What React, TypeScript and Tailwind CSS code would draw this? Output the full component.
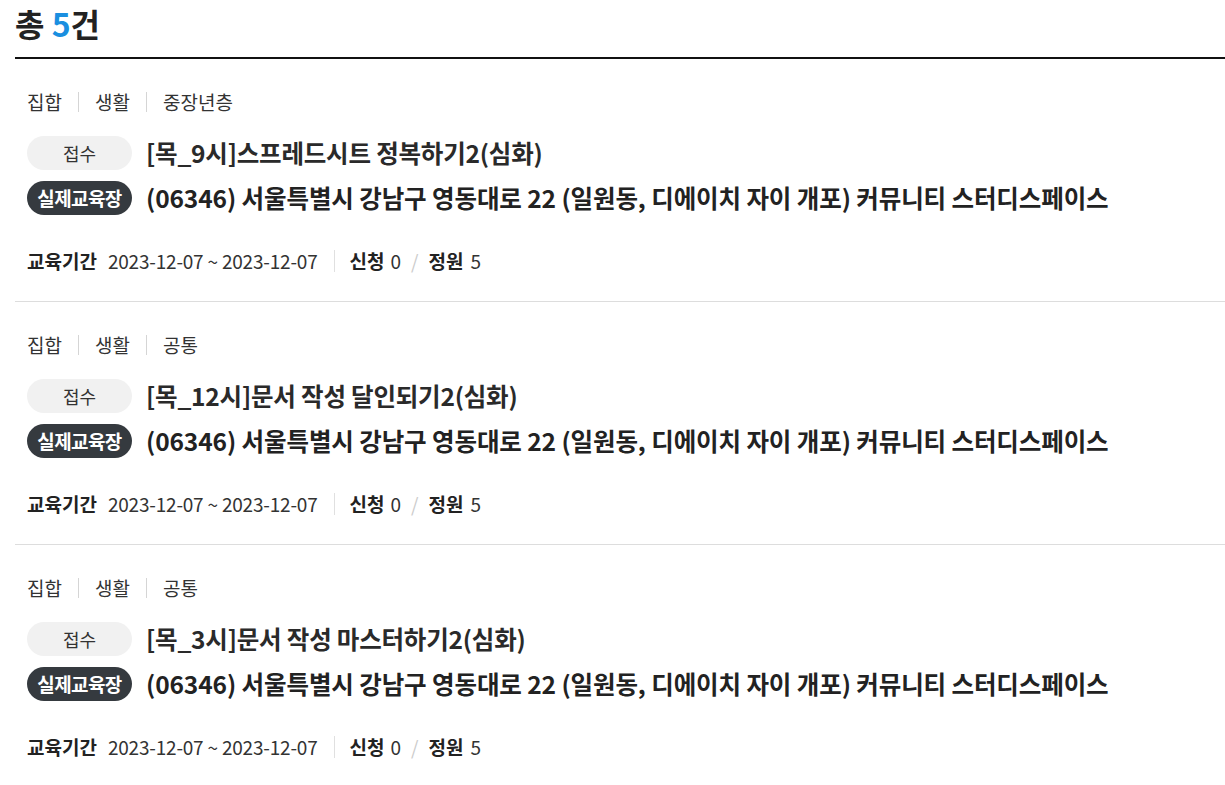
import React from 'react';

interface Course {
  tags: string[];
  status: string;
  title: string;
  address: string;
  period: string;
  applied: number;
  capacity: number;
}

const courses: Course[] = [
  {
    tags: ['집합', '생활', '중장년층'],
    status: '접수',
    title: '[목_9시]스프레드시트 정복하기2(심화)',
    address: '(06346) 서울특별시 강남구 영동대로 22 (일원동, 디에이치 자이 개포) 커뮤니티 스터디스페이스',
    period: '2023-12-07 ~ 2023-12-07',
    applied: 0,
    capacity: 5,
  },
  {
    tags: ['집합', '생활', '공통'],
    status: '접수',
    title: '[목_12시]문서 작성 달인되기2(심화)',
    address: '(06346) 서울특별시 강남구 영동대로 22 (일원동, 디에이치 자이 개포) 커뮤니티 스터디스페이스',
    period: '2023-12-07 ~ 2023-12-07',
    applied: 0,
    capacity: 5,
  },
  {
    tags: ['집합', '생활', '공통'],
    status: '접수',
    title: '[목_3시]문서 작성 마스터하기2(심화)',
    address: '(06346) 서울특별시 강남구 영동대로 22 (일원동, 디에이치 자이 개포) 커뮤니티 스터디스페이스',
    period: '2023-12-07 ~ 2023-12-07',
    applied: 0,
    capacity: 5,
  },
];

const CourseItem: React.FC<{ course: Course }> = ({ course }) => {
  return (
    <li className="border-b border-[#dddddd] pl-3 pt-[31px] pb-[28px]">
      {/* tags */}
      <div className="flex items-center h-6 text-[19px] text-[#333]">
        {course.tags.map((tag, i) => (
          <React.Fragment key={i}>
            {i > 0 && <span className="mx-[16px] h-[20px] w-px bg-[#d5d5d5]" />}
            <span>{tag}</span>
          </React.Fragment>
        ))}
      </div>

      <div className="mt-[22px] flex items-center gap-[14px]">
        <span className="flex h-[34px] w-[105px] items-center justify-center rounded-full bg-[#f1f1f1] text-[18px] text-[#333]">
          {course.status}
        </span>
        <span className="text-[24.5px] font-semibold leading-[34px] tracking-[-0.2px] text-[#2a2a2a]">
          {course.title}
        </span>
      </div>

      <div className="mt-[11px] flex items-center gap-[14px]">
        <span className="flex h-[34px] w-[105px] items-center justify-center rounded-full bg-[#353a3f] text-[19px] font-semibold text-white tracking-[-0.6px]">
          실제교육장
        </span>
        <span className="text-[24.5px] font-semibold leading-[34px] tracking-[-0.1px] text-[#222]">
          {course.address}
        </span>
      </div>

      <div className="mt-[34px] flex items-center h-6 text-[19px] text-[#333]">
        <span className="font-bold text-[#222]">교육기간</span>
        <span className="ml-[11px] tracking-[-0.2px]">{course.period}</span>
        <span className="ml-[17px] mr-[14px] h-[22px] w-px bg-[#e0e0e0]" />
        <span className="font-bold text-[#222]">신청</span>
        <span className="ml-[6px]">{course.applied}</span>
        <span className="mx-[10px] text-[#ccc]">/</span>
        <span className="font-bold text-[#222]">정원</span>
        <span className="ml-[7px]">{course.capacity}</span>
      </div>
    </li>
  );
};

const App: React.FC = () => {
  return (
    <div
      className="min-h-screen bg-white pl-[15px]"
      style={{ fontFamily: '"Noto Sans CJK KR", "Noto Sans", sans-serif' }}
    >
      <h2 className="pt-[3px] pb-[14px] text-[32px] font-bold leading-[40px] text-[#222]">
        총 <span className="text-[#1a8fe0]">5</span>건
      </h2>
      <ul className="border-t-2 border-[#111]">
        {courses.map((course, i) => (
          <CourseItem key={i} course={course} />
        ))}
      </ul>
    </div>
  );
};

export default App;
